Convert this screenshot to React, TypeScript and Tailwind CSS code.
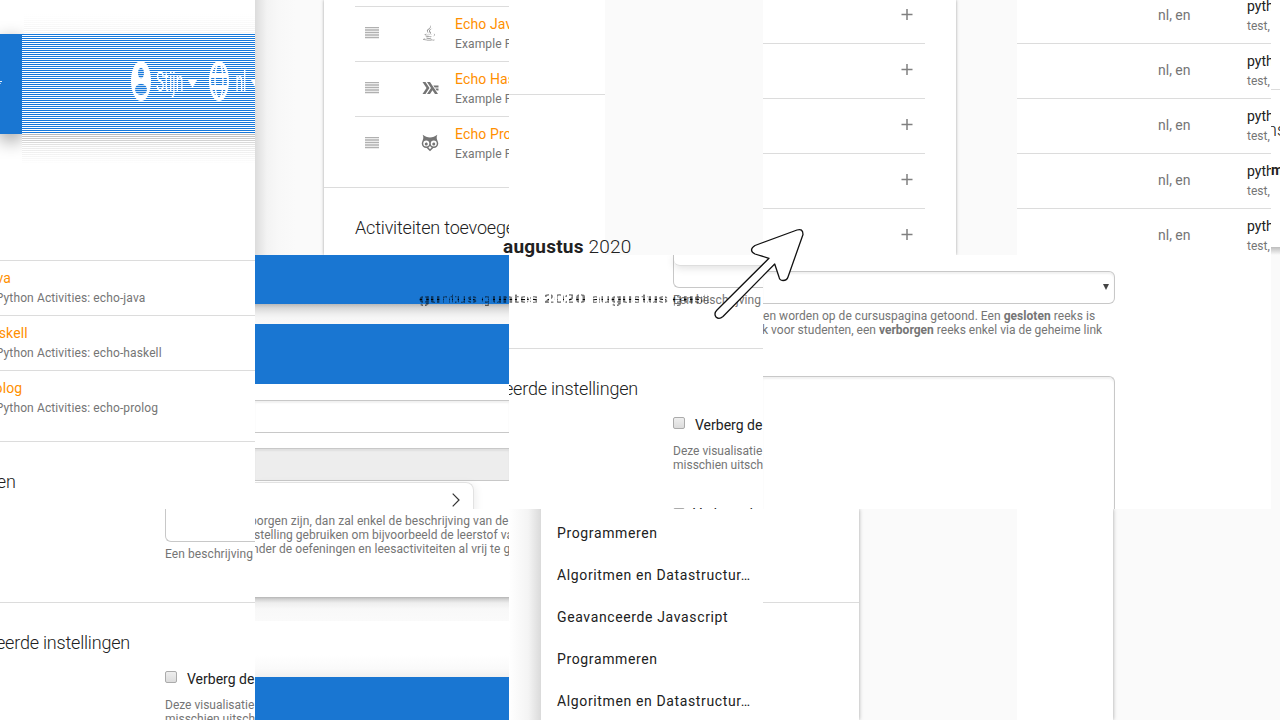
import React from "react";
import { FaJava } from "react-icons/fa";

const OWL =
  "M12,16C12.56,16.84 13.31,17.53 14.2,18L12,20.2L9.8,18C10.69,17.53 11.45,16.84 12,16M17,11.2A2,2 0 0,0 15,13.2A2,2 0 0,0 17,15.2A2,2 0 0,0 19,13.2C19,12.09 18.1,11.2 17,11.2M7,11.2A2,2 0 0,0 5,13.2A2,2 0 0,0 7,15.2A2,2 0 0,0 9,13.2C9,12.09 8.1,11.2 7,11.2M17,8.7A4,4 0 0,1 21,12.7A4,4 0 0,1 17,16.7A4,4 0 0,1 13,12.7A4,4 0 0,1 17,8.7M7,8.7A4,4 0 0,1 11,12.7A4,4 0 0,1 7,16.7A4,4 0 0,1 3,12.7A4,4 0 0,1 7,8.7M2.24,1C4,4.7 2.73,7.46 1.55,10.2C1.19,11 1,11.83 1,12.7A6,6 0 0,0 7,18.7C7.21,18.69 7.42,18.68 7.63,18.65L10.59,21.61L12,23L13.41,21.61L16.37,18.65C16.58,18.68 16.79,18.69 17,18.7A6,6 0 0,0 23,12.7C23,11.83 22.81,11 22.45,10.2C21.27,7.46 20,4.7 21.76,1C19.12,3.06 15.36,4.69 12,4.7C8.64,4.69 4.88,3.06 2.24,1Z";
const HASKELL =
  "M2,20L7.33,12L2,4H6L11.33,12L6,20H2M8,20L13.33,12L8,4H12L22.67,20H18.67L15.33,15L12,20H8M20.89,15.33L19.11,12.67H23.33V15.33H20.89M18.22,11.33L16.44,8.67H23.33V11.33H18.22Z";

function Caret() {
  return (
    <svg width="9" height="9" viewBox="0 0 9 9" className="shrink-0">
      <path d="M0 1H9L4.5 9Z" fill="#fff" />
    </svg>
  );
}

function NavTile() {
  return (
    <div className="overflow-hidden bg-white pt-[34px]">
      <div className="relative flex h-[100px]">
        <div className="relative w-[22px] shrink-0 bg-[#1976d2] shadow-[0_6px_18px_rgba(0,0,0,0.4)]">
          <div className="mt-[47px] h-px w-[2px] bg-white/90" />
          <div className="mt-px h-px w-px bg-white/60" />
        </div>
        <div className="relative flex grow items-center bg-[repeating-linear-gradient(180deg,#1678db_0px,#1678db_1px,#fff_1px,#fff_2px)] pl-[109px]">
          <svg width="20" height="40" viewBox="0 0 20 20" preserveAspectRatio="none" className="mt-[-6px] shrink-0">
            <circle cx="10" cy="10" r="10" fill="#fff" />
            <g fill="#1678db">
              <ellipse cx="10" cy="6" rx="3" ry="2.6" />
              <ellipse cx="10" cy="14.2" rx="6" ry="2.8" />
            </g>
            <path
              d="M6 3.25h8M6 4.25h8M6 5.25h8M6 6.25h8M6 7.25h8M6 8.25h8M3 11.25h14M3 12.25h14M3 13.25h14M3 14.25h14M3 15.25h14M3 16.25h14"
              stroke="#fff"
              strokeWidth=".5"
              shapeRendering="crispEdges"
            />
          </svg>
          <span className="mt-[-6px] ml-[5px] origin-center scale-y-[2] text-[14px] leading-5 text-white">Stijn</span>
          <span className="ml-[5px] -mt-[2px]"><Caret /></span>
          <svg width="20" height="40" viewBox="0 0 20 20" preserveAspectRatio="none" className="mt-[-6px] ml-[12px] shrink-0">
            <circle cx="10" cy="10" r="9" fill="none" stroke="#fff" strokeWidth="2" />
            <ellipse cx="10" cy="10" rx="4" ry="9" fill="none" stroke="#fff" strokeWidth="1.5" />
            <path d="M2 7H18M2 13H18" stroke="#fff" strokeWidth="2" />
          </svg>
          <span className="mt-[-6px] ml-[6px] origin-center scale-y-[2] text-[14px] leading-5 text-white">nl</span>
          <span className="ml-[4px] -mt-[2px] w-[5px] overflow-hidden"><Caret /></span>
        </div>
        <div className="absolute -top-5 right-0 left-6 h-5 bg-[repeating-linear-gradient(180deg,transparent_0px,transparent_1px,#fff_1px,#fff_2px),linear-gradient(180deg,#fff,#f2f2f2)]" />
        <div className="absolute top-[100px] right-0 left-[22px] h-[30px] bg-[repeating-linear-gradient(180deg,transparent_0px,transparent_1px,#fff_1px,#fff_2px),linear-gradient(180deg,#b8b8b8,#e8e8e8_40%,#fff)]" />
      </div>
    </div>
  );
}

function ActivityText({ title, repo }: { title: string; repo: string }) {
  return (
    <div className="pt-[7px] whitespace-nowrap">
      <div className="text-[14px] leading-5 tracking-[0.12px] text-[#ff8f00]">{title}</div>
      <div className="text-[12px] leading-5 tracking-[0.12px] text-[#757575]">{repo}</div>
    </div>
  );
}

const activities = [
  { title: "Echo Java", repo: "Example Python Activities: echo-java", icon: <FaJava size={16} color="#8a8a8a" /> },
  {
    title: "Echo Haskell",
    repo: "Example Python Activities: echo-haskell",
    icon: (
      <svg width="18" height="18" viewBox="0 0 24 24" fill="#757575"><path d={HASKELL} /></svg>
    ),
  },
  {
    title: "Echo Prolog",
    repo: "Example Python Activities: echo-prolog",
    icon: (
      <svg width="18" height="18" viewBox="0 0 24 24" fill="#757575"><path d={OWL} /></svg>
    ),
  },
];

function Handle() {
  return (
    <svg width="14" height="12" viewBox="0 0 14 12" className="shrink-0">
      <path d="M0 .5H14M0 3H14M0 5.5H14M0 8H14M0 10.5H14" stroke="#b0b0b0" strokeWidth="1.3" />
    </svg>
  );
}

function SeriesTile() {
  return (
    <div className="flex overflow-hidden bg-[linear-gradient(90deg,#dcdcdc_0px,#e8e8e8_6px,#f3f3f3_12px,#f8f8f8_24px,#fafafa_40px)] pl-[69px]">
      <div className="w-[185px] shrink-0 bg-white pt-[6px] shadow-[0_0_3px_rgba(0,0,0,0.35)]">
        <div className="ml-[31px]">
          {activities.map((a) => (
            <div key={a.title} className="flex h-[55px] border-t border-[#dcdcdc]">
              <div className="flex w-[66px] shrink-0 items-center pb-[2px] pl-[10px]"><Handle /></div>
              <div className="flex w-[34px] shrink-0 items-center pb-[3px]">{a.icon}</div>
              <ActivityText title={a.title} repo={a.repo} />
            </div>
          ))}
        </div>
        <div className="mt-[16px] border-t border-[#dcdcdc] pt-[27px] pl-[31px] text-[18px] leading-[26px] font-light tracking-[-0.18px] whitespace-nowrap text-[#212121]">
          Activiteiten toevoegen
        </div>
      </div>
    </div>
  );
}

function ActivityTailTile() {
  return (
    <div className="overflow-hidden bg-white pt-[5px]">
      {activities.map((a) => (
        <div key={a.title} className="h-[55px] border-t border-[#dcdcdc]">
          <div className="-ml-[54px]"><ActivityText title={a.title} repo={a.repo} /></div>
        </div>
      ))}
      <div className="mt-[16px] border-t border-[#dcdcdc] pt-[27px]">
        <div className="-ml-[154px] text-[18px] leading-[26px] font-light tracking-[-0.18px] whitespace-nowrap text-[#212121]">Activiteiten toevoegen</div>
      </div>
    </div>
  );
}

function Plus() {
  return (
    <svg width="12" height="11" viewBox="0 0 12 11">
      <path d="M6 0V11M0.500 5.500H11.500" stroke="#808080" strokeWidth="1.5" />
    </svg>
  );
}

const five = [0, 1, 2, 3, 4];

function AddTile() {
  return (
    <div className="flex overflow-hidden bg-[#fafafa]">
      <div className="w-[193px] bg-white pr-[31px] shadow-[0_0_3px_rgba(0,0,0,0.35)]">
        <div className="-mt-[11px]">
          {five.map((i) => (
            <div key={i} className="flex h-[55px] items-center justify-end border-b border-[#dcdcdc] pr-[12px] pb-[3px]">
              <Plus />
            </div>
          ))}
        </div>
      </div>
    </div>
  );
}

function LanguageTile() {
  return (
    <div className="overflow-hidden bg-white">
      <div className="-mt-[11px]">
        {five.map((i) => (
          <div key={i} className="flex h-[55px] border-b border-[#dcdcdc] pl-[141px] whitespace-nowrap">
            <div className="w-[89px] shrink-0 pt-[16px] text-[14px] leading-5 text-[#757575]">nl, en</div>
            <div className="pt-[7px]">
              <div className="text-[14px] leading-5 text-[#212121]">python</div>
              <div className="text-[12px] leading-5 text-[#757575]">test, python</div>
            </div>
          </div>
        ))}
      </div>
    </div>
  );
}

function EdgeTile() {
  return (
    <div className="overflow-hidden bg-white">
      <div className="mt-[89px] border-t border-[#dcdcdc] pt-[30px] whitespace-nowrap">
        <div className="-ml-[4px] text-[18px] leading-5 font-light text-[#212121]">ns</div>
        <div className="mt-[20px] text-[14px] leading-5 font-bold text-[#212121]">m</div>
      </div>
      <div className="mt-[67px] h-[8px] bg-[linear-gradient(180deg,#bdbdbd,#fafafa)]" />
    </div>
  );
}

function FormHeaderTile() {
  return (
    <div className="overflow-hidden bg-white">
      <div className="h-[49px] bg-[#1976d2]" />
      <div className="h-[20px] bg-[linear-gradient(180deg,#b9b9b9_0px,#d8d8d8_4px,#eee_10px,#f6f6f6_14px,#f8f8f8_20px)]" />
      <div className="h-[60px] bg-[#1976d2]" />
      <div className="mt-[16px] h-[33px] border-y border-[#c8c8c8] shadow-[inset_0_2px_2px_rgba(0,0,0,0.06)]" />
      <div className="mt-[15px] h-[33px] border-y border-[#c8c8c8] bg-[#ededed] shadow-[inset_0_2px_2px_rgba(0,0,0,0.06)]" />
      <div className="mt-px flex h-[40px] w-[219px] items-start justify-end rounded-tr-lg border-t border-r border-[#e2e2e2] pt-[10px] pr-[13px] shadow-[2px_2px_8px_rgba(0,0,0,0.07)]">
        <svg width="8" height="14" viewBox="0 0 8 14">
          <path d="M.7.7L7 7L.7 13.3" fill="none" stroke="#333" strokeWidth="1.2" />
        </svg>
      </div>
    </div>
  );
}

function Checkbox() {
  return <div className="h-3 w-3 shrink-0 rounded-[2px] border border-[#ababab] bg-[linear-gradient(180deg,#eee,#dcdcdc)]" />;
}

function Advanced({ repeat }: { repeat?: boolean }) {
  return (
    <div className="border-t border-[#dcdcdc] whitespace-nowrap">
      <div className="flex pt-[27px]">
        <div className="flex w-[130px] shrink-0 justify-end text-[18px] leading-[26px] font-light tracking-[-0.2px] text-[#212121]">Geavanceerde instellingen</div>
      </div>
      <div className="pt-[14px] pl-[165px]">
        <div className="flex h-[20px] gap-[10px] pt-[1px]">
          <Checkbox />
          <span className="-mt-[2px] text-[14px] leading-[20px] text-[#212121]">Verberg de scores</span>
        </div>
        <div className="mt-[8px] text-[12px] leading-[14px] text-[#757575]">
          Deze visualisatie kan
          <br />
          misschien uitschakelen
        </div>
        {repeat && (
          <div className="mt-[36px] flex gap-[8px]">
            <Checkbox />
            <span className="-mt-[4px] text-[14px] leading-[20px] text-[#212121]">Verberg de</span>
          </div>
        )}
      </div>
    </div>
  );
}

function DescriptionTile() {
  return (
    <div className="overflow-hidden bg-white">
      <div className="ml-[164px] h-[33px] rounded-bl-md border-b border-l border-[#c8c8c8]">
        <div className="h-[11px] rounded-bl-md border-b border-[#dedede] bg-white shadow-[0_2px_8px_rgba(0,0,0,0.13)]" />
      </div>
      <div className="mt-[5px] ml-[164px] text-[12px] leading-[14px] tracking-[0.08px] whitespace-nowrap text-[#757575]">Een beschrijving</div>
      <div className="mt-[41px] -ml-px"><Advanced repeat /></div>
    </div>
  );
}

function DescriptionLowerTile() {
  return (
    <div className="overflow-hidden bg-white">
      <div className="ml-[165px] h-[33px] rounded-bl-md border-b border-l border-[#c8c8c8]" />
      <div className="mt-[5px] ml-[165px] text-[12px] leading-[14px] tracking-[0.08px] whitespace-nowrap text-[#757575]">Een beschrijving</div>
      <div className="mt-[41px]"><Advanced /></div>
    </div>
  );
}

function AccessTile() {
  return (
    <div className="col-span-2 overflow-hidden bg-white pt-[16px]">
      <div className="flex h-[33px] w-[352px] items-center justify-end rounded-r-md border border-l-0 border-[#c8c8c8] pr-[5px] pb-px shadow-[inset_0_2px_2px_rgba(0,0,0,0.06)]">
        <svg width="6" height="6" viewBox="0 0 6 6"><path d="M0 0H6L3 6Z" fill="#444" /></svg>
      </div>
      <div className="mt-[5px] text-[12px] leading-[14px] whitespace-nowrap text-[#757575]">
        <div className="tracking-[0.04px]">en worden op de cursuspagina getoond. Een <b>gesloten</b> reeks is</div>
        <div className="-ml-px tracking-[0.015px]">k voor studenten, een <b>verborgen</b> reeks enkel via de geheime link</div>
      </div>
      <div className="mt-[39px] h-[150px] w-[352px] rounded-tr-md border-t border-r border-[#c8c8c8] shadow-[inset_0_2px_2px_rgba(0,0,0,0.06)]" />
    </div>
  );
}

function HelpTile() {
  return (
    <div className="overflow-hidden bg-white">
      <div className="h-[88px] pt-[5px] text-[12px] leading-[14px] tracking-[0.08px] whitespace-nowrap text-[#757575]">
        <div className="-ml-[5px]">borgen zijn, dan zal enkel de beschrijving van de</div>
        <div className="-ml-px tracking-[0.03px]">stelling gebruiken om bijvoorbeeld de leerstof van</div>
        <div className="-ml-[3px] tracking-[0.05px]">nder de oefeningen en leesactiviteiten al vrij te g</div>
      </div>
      <div className="h-[24px] bg-[linear-gradient(180deg,#b5b5b5_0px,#d0d0d0_2px,#eee_6px,#f8f8f8_12px,#fafafa_24px)]" />
      <div className="h-[56px] bg-[linear-gradient(180deg,#fff_60%,#fafafa_85%,#f0f0f0)]" />
      <div className="h-[43px] bg-[#1976d2]" />
    </div>
  );
}

const courses = ["Programmeren", "Algoritmen en Datastructur…", "Geavanceerde Javascript", "Programmeren", "Algoritmen en Datastructur…"];

function MenuTile() {
  return (
    <div className="flex overflow-hidden bg-white">
      <div className="w-8 shrink-0 bg-[linear-gradient(90deg,#fff,#f4f4f4_60%,#dadada)]" />
      <ul className="grow pt-[3px] pl-4">
        {courses.map((c, i) => (
          <li key={i} className="flex h-[42px] items-center text-[14px] leading-5 tracking-[0.63px] whitespace-nowrap text-[#212121]">{c}</li>
        ))}
      </ul>
    </div>
  );
}

function ArrowOverlay() {
  return (
    <svg className="absolute top-[225px] left-[710px]" width="100" height="100" viewBox="710 225 100 100">
      <path
        d="M755 245.5L797 230Q803 228 803 234.500L788 277Q787 280.500 783 280.500Q779.500 280.500 779 277L774.700 264L723 316.500Q719 320 716 317Q713.500 313.500 717 310L769 258.300L755 254Q748 250 755 245.500Z"
        fill="#fff"
        stroke="#111"
        strokeWidth="1.3"
        strokeLinejoin="round"
      />
    </svg>
  );
}

export default function App() {
  return (
    <main className="relative h-[720px] w-[1280px] overflow-hidden bg-[#fafafa] font-[Roboto,sans-serif]">
      <div className="grid h-full grid-cols-[255px_254px_254px_254px_254px_9px] grid-rows-[255px_254px_211px]">
        <NavTile />
        <SeriesTile />
        <div className="bg-[#fafafa]">
          <div className="h-full w-[96px] bg-white pt-[94px]"><div className="h-px bg-[#dcdcdc]" /></div>
        </div>
        <AddTile />
        <LanguageTile />
        <EdgeTile />

        <ActivityTailTile />
        <FormHeaderTile />
        <DescriptionTile />
        <AccessTile />
        <div className="bg-[#fafafa]" />

        <DescriptionLowerTile />
        <HelpTile />
        <MenuTile />
        <div className="overflow-hidden bg-[#fafafa]">
          <div className="h-full w-[96px] bg-white pt-[93px] shadow-[0_0_4px_rgba(0,0,0,0.35)]"><div className="h-px bg-[#dcdcdc]" /></div>
        </div>
        <div className="col-span-2 overflow-hidden bg-[#fafafa]">
          <div className="h-full w-[96px] bg-white shadow-[0_0_4px_rgba(0,0,0,0.35)]" />
        </div>
      </div>

      <div className="absolute top-[235px] left-[503px] text-[19px] leading-6 font-light tracking-[0.22px] whitespace-nowrap text-[#212121]">
        <b className="font-bold">augustus</b> 2020
      </div>
      <div className="absolute top-[287px] left-[419px] origin-center scale-y-[0.7] text-[19px] leading-6 font-bold tracking-[-0.2px] whitespace-nowrap text-black [mask-composite:intersect] [mask-image:repeating-linear-gradient(180deg,#000_0px,#000_1.5px,transparent_1.5px,transparent_3px),repeating-linear-gradient(90deg,#000_0px,#000_4.5px,transparent_4.5px,transparent_6px)]">
        guntus guntes 2020 augustus gust
      </div>
      <ArrowOverlay />
    </main>
  );
}
